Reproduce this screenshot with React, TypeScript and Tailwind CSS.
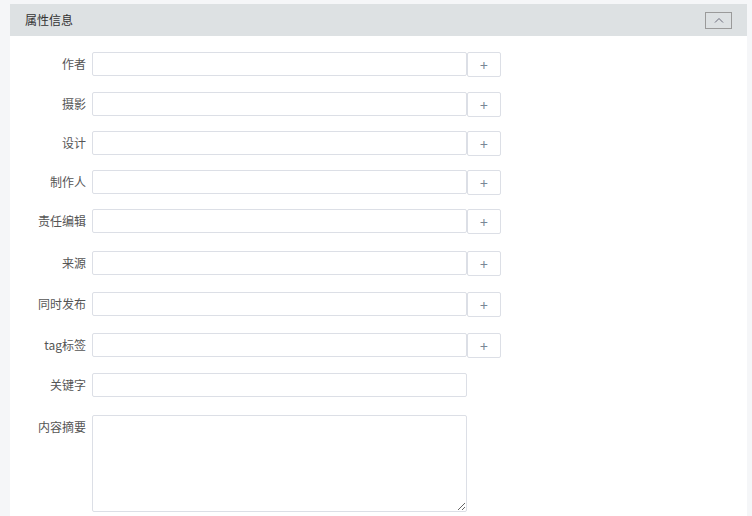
import { useState } from "react";

type Field = {
  label: string;
  gap: string;
  addable: boolean;
};

const fields: Field[] = [
  { label: "作者", gap: "mt-[16px]", addable: true },
  { label: "摄影", gap: "mt-[15px]", addable: true },
  { label: "设计", gap: "mt-[14px]", addable: true },
  { label: "制作人", gap: "mt-[14px]", addable: true },
  { label: "责任编辑", gap: "mt-[14px]", addable: true },
  { label: "来源", gap: "mt-[17px]", addable: true },
  { label: "同时发布", gap: "mt-[16px]", addable: true },
  { label: "tag标签", gap: "mt-[16px]", addable: true },
  { label: "关键字", gap: "mt-[15px]", addable: false },
];

const font = "font-['Microsoft_YaHei','Noto_Sans_CJK_SC',sans-serif]";

export default function App() {
  const [open, setOpen] = useState(true);

  return (
    <div className={`bg-[#f5f6f8] w-[752px] h-[516px] overflow-hidden pt-[4px] pl-[10px] pr-[5px] ${font}`}>
      <div className="bg-white h-full flex flex-col">
        <div className="bg-[#dde1e3] h-[32px] flex items-center justify-between pl-[15px] pr-[15px] shrink-0">
          <span className="text-[12px] text-[#333]">属性信息</span>
          <button
            onClick={() => setOpen(!open)}
            className="w-[27px] h-[17px] border border-[#9a9a9a] flex items-center justify-center"
          >
            <svg width="10" height="6" viewBox="0 0 10 6" fill="none">
              <path d="M1 5.5L5 1.5L9 5.5" stroke="#6a6a7a" strokeWidth="1" />
            </svg>
          </button>
        </div>

        {open && (
          <div className="flex flex-col">
            {fields.map((f) => (
              <div key={f.label} className={`flex items-start ${f.gap}`}>
                <label className="w-[76px] h-[24px] flex items-center justify-end text-[12px] text-[#555]">{f.label}</label>
                <input
                  type="text"
                  className="ml-[6px] w-[375px] h-[24px] border border-[#dcdfe6] rounded-[2px] bg-white outline-none px-2 text-[12px]"
                />
                {f.addable && (
                  <button className="w-[34px] h-[25px] border border-[#dcdfe6] rounded-[2px] bg-white flex items-center justify-center text-[14px] text-[#7a8796] leading-none">
                    +
                  </button>
                )}
              </div>
            ))}

            <div className="flex items-start mt-[18px]">
              <label className="w-[76px] text-right text-[12px] text-[#555] pt-[3px]">内容摘要</label>
              <textarea className="ml-[6px] w-[375px] h-[97px] border border-[#dcdfe6] rounded-[2px] bg-white outline-none p-2 text-[12px]" />
            </div>
          </div>
        )}
      </div>
    </div>
  );
}
